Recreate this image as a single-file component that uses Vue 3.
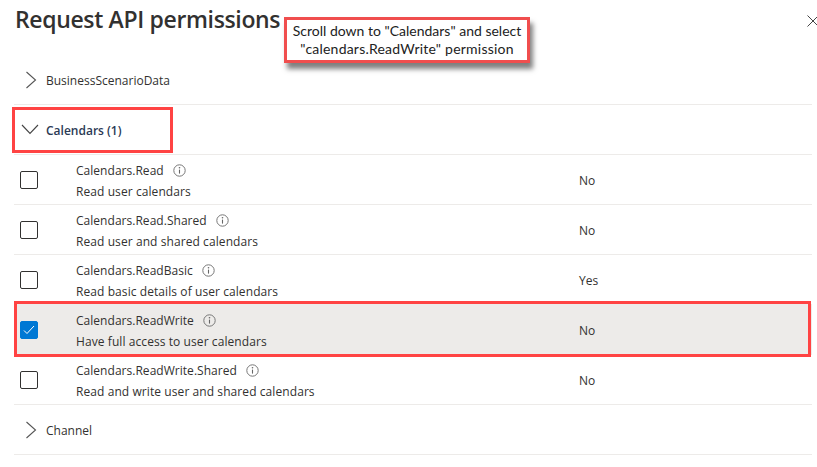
<template>
  <div class="panel">
    <header class="panel-head">
      <h1>Request API permissions</h1>
      <button class="close" aria-label="Close">
        <svg width="12" height="12" viewBox="0 0 12 12"><path d="M.5.5l11 11M11.500.5l-11 11" stroke="#444" stroke-width="1" fill="none" /></svg>
      </button>
    </header>

    <div class="callout">Scroll down to "Calendars" and select<br /><span class="second">"calendars.ReadWrite" permission</span></div>

    <div class="group">
      <svg class="chev" width="12" height="18" viewBox="0 0 12 18"><path d="M1.500 1l9 8-9 8" stroke="#555" stroke-width="1.1" fill="none" /></svg>
      <span>BusinessScenarioData</span>
    </div>

    <div class="group open">
      <svg class="chev-down" width="18" height="11" viewBox="0 0 18 11"><path d="M1 1l8 8.500 8-8.500" stroke="#444" stroke-width="1.1" fill="none" /></svg>
      <span>Calendars (1)</span>
      <div class="mark"></div>
    </div>

    <div v-for="p in permissions" :key="p.name" class="row" :class="{ selected: p.checked }">
      <span class="check" :class="{ on: p.checked }">
        <svg v-if="p.checked" width="12" height="10" viewBox="0 0 12 10"><path d="M1 5.500l3 3 7-7.500" stroke="#fff" stroke-width="1" fill="none" /></svg>
      </span>
      <div class="info">
        <div class="name">
          {{ p.name }}
          <svg class="info-icon" width="13" height="13" viewBox="0 0 13 13">
            <circle cx="6.500" cy="6.500" r="5.700" stroke="#777" fill="none" />
            <path d="M6.500 5.600v4" stroke="#666" stroke-width="1.100" />
            <circle cx="6.500" cy="3.800" r=".8" fill="#666" />
          </svg>
        </div>
        <div class="desc">{{ p.desc }}</div>
      </div>
      <div class="consent">{{ p.admin }}</div>
      <div v-if="p.checked" class="mark"></div>
    </div>

    <div class="group">
      <svg class="chev" width="12" height="18" viewBox="0 0 12 18"><path d="M1.500 1l9 8-9 8" stroke="#555" stroke-width="1.1" fill="none" /></svg>
      <span>Channel</span>
    </div>
  </div>
</template>

<script setup>
const permissions = [
  { name: "Calendars.Read", desc: "Read user calendars", admin: "No" },
  { name: "Calendars.Read.Shared", desc: "Read user and shared calendars", admin: "No" },
  { name: "Calendars.ReadBasic", desc: "Read basic details of user calendars", admin: "Yes" },
  { name: "Calendars.ReadWrite", desc: "Have full access to user calendars", admin: "No", checked: true },
  { name: "Calendars.ReadWrite.Shared", desc: "Read and write user and shared calendars", admin: "No" },
];
</script>

<style scoped>
.panel {
  position: relative;
  width: 817px;
  height: 467px;
  box-sizing: border-box;
  padding: 0 5px 0 14px;
  overflow: hidden;
  background: #fff;
  color: #323130;
  font-family: "Open Sans", "Noto Sans", sans-serif;
  font-size: 12px;
}
.panel-head {
  display: flex;
  justify-content: space-between;
  height: 55px;
  margin-right: -7px;
}
h1 {
  margin: 2px 0 0 1px;
  font-size: 23px;
  line-height: 34px;
  font-weight: 600;
  letter-spacing: -0.35px;
  color: #323130;
}
.close {
  width: 12px;
  height: 12px;
  margin: 15px 0 0;
  padding: 0;
  border: 0;
  background: none;
  display: flex;
}
.callout {
  position: absolute;
  left: 284px;
  top: 17px;
  width: 246px;
  height: 46px;
  box-sizing: border-box;
  border: 3px solid #f04e4e;
  background: #fff;
  box-shadow: 3px 6px 5px rgba(0, 0, 0, 0.5);
  color: #222;
  font-family: Lato, "Open Sans", sans-serif;
  font-size: 14px;
  line-height: 18px;
  text-align: center;
  white-space: nowrap;
  padding-top: 2px;
}
.second {
  letter-spacing: 0.22px;
}
.group {
  position: relative;
  display: flex;
  align-items: center;
  height: 50px;
  box-sizing: border-box;
  border-bottom: 1px solid #edebe9;
  padding-left: 11px;
  gap: 9px;
}
.group > span {
  margin-top: 2px;
}
.group.open {
  padding-left: 7px;
  gap: 7px;
  font-weight: 600;
  color: #2b3a55;
}
.group.open .mark {
  left: -2px;
  top: 2px;
  width: 161px;
  height: 46px;
}
.row {
  position: relative;
  display: flex;
  align-items: center;
  height: 50px;
  box-sizing: border-box;
  border-bottom: 1px solid #edebe9;
  padding-left: 6px;
  letter-spacing: 0.03px;
}
.row.selected {
  background: #edebe9;
}
.check {
  flex: none;
  width: 18px;
  height: 18px;
  margin-top: 1px;
  box-sizing: border-box;
  border: 1px solid #323130;
  border-radius: 2px;
  display: flex;
  align-items: center;
  justify-content: center;
  background: #fff;
}
.check.on {
  background: #0078d4;
  border-color: #0078d4;
}
.info {
  width: 503px;
  margin: 3px 0 0 38px;
}
.name,
.desc {
  line-height: 21px;
}
.desc {
  letter-spacing: 0.08px;
}
.info-icon {
  margin-left: 6px;
  vertical-align: -2px;
}
.consent {
  line-height: 20px;
  margin-top: 3px;
}
.mark {
  position: absolute;
  box-sizing: border-box;
  border: 3px solid #ff4343;
  pointer-events: none;
}
.row .mark {
  left: 0;
  top: -4px;
  right: 1px;
  height: 56px;
}
</style>
